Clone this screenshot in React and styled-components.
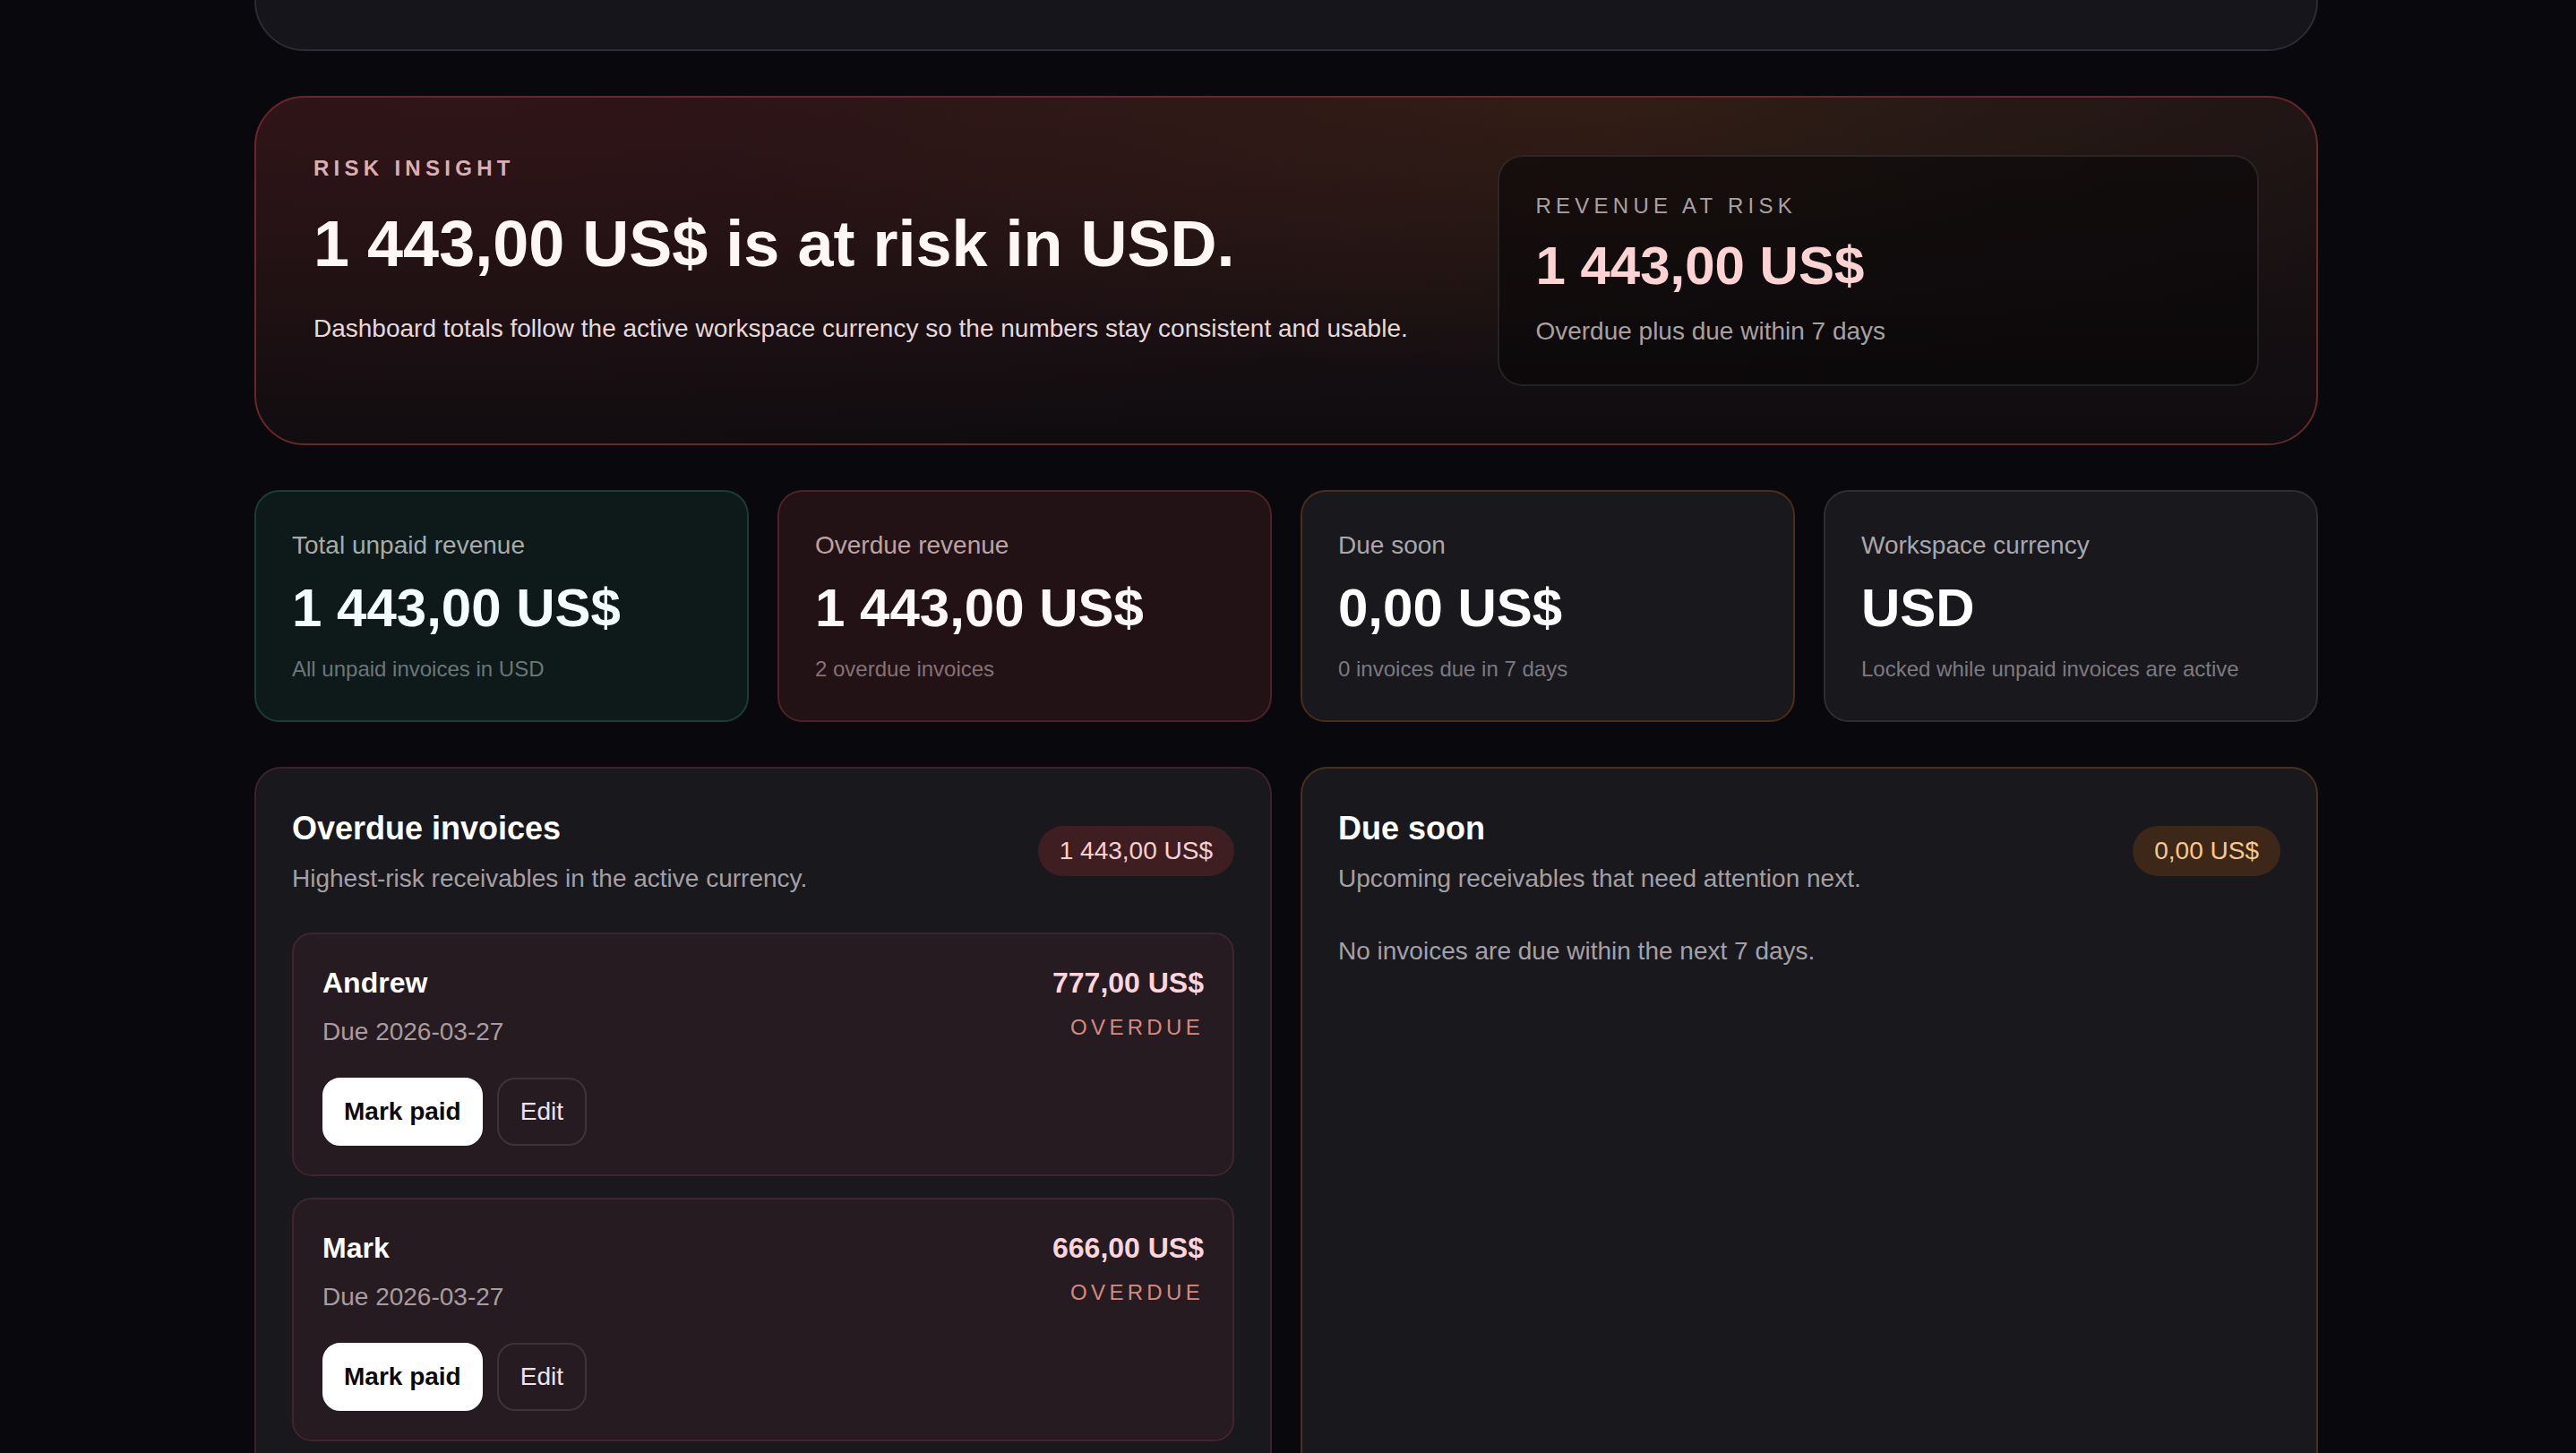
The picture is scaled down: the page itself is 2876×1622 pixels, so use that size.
import React from "react";
import styled, { createGlobalStyle, css } from "styled-components";

const GlobalStyle = createGlobalStyle`
  html, body {
    margin: 0;
    padding: 0;
    background: #09080c;
  }
  body {
    font-family: "Liberation Sans", Arial, Helvetica, sans-serif;
    color: #ffffff;
    -webkit-font-smoothing: antialiased;
  }
  *, *::before, *::after { box-sizing: border-box; }
`;

const Viewport = styled.div`
  height: 1622px;
  overflow: hidden;
  padding-right: 4px;
  background: #09080c;
`;

const Page = styled.main`
  width: 2304px;
  margin: 0 auto;
  display: flex;
  flex-direction: column;
  gap: 50px;
  padding-bottom: 80px;
`;

const TopCard = styled.section`
  height: 200px;
  margin-top: -143px;
  border: 2px solid #2d2c33;
  border-radius: 56px;
  background: #16151b;
`;

const RiskCard = styled.section`
  border: 2px solid #6b2629;
  border-radius: 56px;
  padding: 64px;
  display: grid;
  grid-template-columns: minmax(0, 1.5fr) minmax(0, 1fr);
  gap: 48px;
  align-items: start;
  background:
    radial-gradient(100% 140% at 10% 0%, rgba(105, 26, 30, 0.26) 0%, rgba(105, 26, 30, 0) 75%),
    radial-gradient(60% 110% at 66% 0%, rgba(120, 76, 22, 0.18) 0%, rgba(120, 76, 22, 0) 75%),
    linear-gradient(180deg, #1d1315 0%, #171012 55%, #0f0c10 100%);
`;

const Eyebrow = styled.div`
  font-size: 24px;
  font-weight: 700;
  line-height: 30px;
  letter-spacing: 0.22em;
  text-transform: uppercase;
  color: #dcaeb2;
`;

const Headline = styled.h1`
  margin: 30px 0 0;
  font-size: 72px;
  font-weight: 700;
  line-height: 1.1;
  color: #fff7f5;
`;

const Lead = styled.p`
  margin: 34px 0 0;
  font-size: 28px;
  line-height: 42px;
  color: #e7d9d9;
`;

const RiskBox = styled.div`
  border: 2px solid rgba(255, 255, 255, 0.1);
  border-radius: 28px;
  padding: 40px;
  background: rgba(8, 6, 9, 0.6);
`;

const BoxLabel = styled.div`
  font-size: 24px;
  line-height: 30px;
  letter-spacing: 0.22em;
  text-transform: uppercase;
  color: #aaa2a2;
`;

const BoxAmount = styled.div`
  margin-top: 19px;
  font-size: 60px;
  font-weight: 700;
  line-height: 66px;
  color: #ffd3d3;
`;

const BoxNote = styled.div`
  margin-top: 20px;
  font-size: 28px;
  line-height: 39px;
  color: #a7a0a1;
`;

const statTones = {
  teal: css`
    background: #0e191a;
    border-color: #1a3d37;
    --label: #a4acab;
    --note: #6b7777;
    --value: #f6ffff;
  `,
  red: css`
    background: #221216;
    border-color: #4f2228;
    --label: #b9a3a6;
    --note: #867175;
    --value: #fff9f9;
  `,
  amber: css`
    background: #19181d;
    border-color: #4a2d1a;
    --label: #a8a7ac;
    --note: #7c7a80;
    --value: #ffffff;
  `,
  neutral: css`
    background: #19181d;
    border-color: #2e2d33;
    --label: #a8a7ac;
    --note: #7c7a80;
    --value: #ffffff;
  `,
};

const StatsGrid = styled.section`
  display: grid;
  grid-template-columns: repeat(4, minmax(0, 1fr));
  gap: 32px;
`;

const StatCard = styled.article`
  border: 2px solid;
  border-radius: 28px;
  padding: 40px;
  ${(p) => statTones[p.$tone]}
`;

const StatLabel = styled.div`
  font-size: 28px;
  line-height: 39px;
  color: var(--label);
`;

const StatValue = styled.div`
  margin-top: 18px;
  font-size: 60px;
  font-weight: 700;
  line-height: 66px;
  color: var(--value);
`;

const StatNote = styled.div`
  margin-top: 18px;
  font-size: 24px;
  line-height: 34px;
  color: var(--note);
`;

const PanelsGrid = styled.section`
  display: grid;
  grid-template-columns: repeat(2, minmax(0, 1fr));
  gap: 32px;
`;

const Panel = styled.article`
  border: 2px solid ${(p) => (p.$tone === "red" ? "#3c2329" : "#47301f")};
  border-radius: 30px;
  padding: 40px;
  background: #19181d;
`;

const PanelHeader = styled.header`
  display: flex;
  align-items: center;
  justify-content: space-between;
  gap: 24px;
  margin-bottom: 39px;
`;

const PanelTitle = styled.h2`
  margin: 0;
  font-size: 36px;
  font-weight: 700;
  line-height: 54px;
  color: #ffffff;
`;

const PanelSub = styled.p`
  margin: 8px 0 0;
  font-size: 28px;
  line-height: 42px;
  color: #a2a0a7;
`;

const Pill = styled.span`
  flex: none;
  padding: 8px 24px;
  border-radius: 999px;
  font-size: 28px;
  line-height: 40px;
  white-space: nowrap;
  ${(p) =>
    p.$tone === "red"
      ? css`
          background: #3f1e22;
          color: #f4d2d3;
        `
      : css`
          background: #3d2718;
          color: #f7c98d;
        `}
`;

const InvoiceList = styled.div`
  display: flex;
  flex-direction: column;
  gap: 24px;
`;

const InvoiceCard = styled.div`
  border: 2px solid #41252c;
  border-radius: 22px;
  padding: 32px;
  background: #261b20;
`;

const InvoiceTop = styled.div`
  display: flex;
  justify-content: space-between;
  align-items: flex-start;
  gap: 24px;
`;

const InvoiceMeta = styled.div`
  display: flex;
  flex-direction: column;
  gap: 12px;
`;

const InvoiceAmounts = styled.div`
  display: flex;
  flex-direction: column;
  align-items: flex-end;
  gap: 10px;
`;

const ClientName = styled.div`
  font-size: 32px;
  font-weight: 700;
  line-height: 45px;
  color: #ffffff;
`;

const DueDate = styled.div`
  font-size: 28px;
  line-height: 39px;
  color: #a99ba0;
`;

const Amount = styled.div`
  font-size: 32px;
  font-weight: 700;
  line-height: 45px;
  color: #ffd4da;
`;

const Status = styled.div`
  font-size: 24px;
  line-height: 34px;
  letter-spacing: 0.18em;
  text-transform: uppercase;
  color: #d58a80;
`;

const Actions = styled.div`
  display: flex;
  gap: 16px;
  margin-top: 32px;
`;

const Button = styled.button`
  font-family: inherit;
  font-size: 28px;
  line-height: 40px;
  border-radius: 20px;
  border: 2px solid;
  cursor: pointer;
  ${(p) =>
    p.$variant === "primary"
      ? css`
          padding: 16px 22px;
          background: #ffffff;
          border-color: #ffffff;
          color: #0b0b0e;
          font-weight: 700;
        `
      : css`
          padding: 16px 24px;
          background: transparent;
          border-color: rgba(255, 255, 255, 0.11);
          color: #eee3e5;
          font-weight: 400;
        `}
`;

const EmptyText = styled.p`
  margin: 0;
  font-size: 28px;
  line-height: 42px;
  color: #a3a1a7;
`;

const stats = [
  { tone: "teal", label: "Total unpaid revenue", value: "1 443,00 US$", note: "All unpaid invoices in USD" },
  { tone: "red", label: "Overdue revenue", value: "1 443,00 US$", note: "2 overdue invoices" },
  { tone: "amber", label: "Due soon", value: "0,00 US$", note: "0 invoices due in 7 days" },
  { tone: "neutral", label: "Workspace currency", value: "USD", note: "Locked while unpaid invoices are active" },
];

const overdue = [
  { name: "Andrew", due: "2026-03-27", amount: "777,00 US$" },
  { name: "Mark", due: "2026-03-27", amount: "666,00 US$" },
];

export default function App() {
  return (
    <Viewport>
      <GlobalStyle />
      <Page>
        <TopCard />

        <RiskCard>
          <div>
            <Eyebrow>Risk insight</Eyebrow>
            <Headline>1 443,00 US$ is at risk in USD.</Headline>
            <Lead>
              Dashboard totals follow the active workspace currency so the numbers stay consistent and usable.
            </Lead>
          </div>
          <RiskBox>
            <BoxLabel>Revenue at risk</BoxLabel>
            <BoxAmount>1 443,00 US$</BoxAmount>
            <BoxNote>Overdue plus due within 7 days</BoxNote>
          </RiskBox>
        </RiskCard>

        <StatsGrid>
          {stats.map((s) => (
            <StatCard key={s.label} $tone={s.tone}>
              <StatLabel>{s.label}</StatLabel>
              <StatValue>{s.value}</StatValue>
              <StatNote>{s.note}</StatNote>
            </StatCard>
          ))}
        </StatsGrid>

        <PanelsGrid>
          <Panel $tone="red">
            <PanelHeader>
              <div>
                <PanelTitle>Overdue invoices</PanelTitle>
                <PanelSub>Highest-risk receivables in the active currency.</PanelSub>
              </div>
              <Pill $tone="red">1 443,00 US$</Pill>
            </PanelHeader>
            <InvoiceList>
              {overdue.map((inv) => (
                <InvoiceCard key={inv.name}>
                  <InvoiceTop>
                    <InvoiceMeta>
                      <ClientName>{inv.name}</ClientName>
                      <DueDate>Due {inv.due}</DueDate>
                    </InvoiceMeta>
                    <InvoiceAmounts>
                      <Amount>{inv.amount}</Amount>
                      <Status>Overdue</Status>
                    </InvoiceAmounts>
                  </InvoiceTop>
                  <Actions>
                    <Button $variant="primary">Mark paid</Button>
                    <Button $variant="ghost">Edit</Button>
                  </Actions>
                </InvoiceCard>
              ))}
            </InvoiceList>
          </Panel>

          <Panel $tone="amber">
            <PanelHeader>
              <div>
                <PanelTitle>Due soon</PanelTitle>
                <PanelSub>Upcoming receivables that need attention next.</PanelSub>
              </div>
              <Pill $tone="amber">0,00 US$</Pill>
            </PanelHeader>
            <EmptyText>No invoices are due within the next 7 days.</EmptyText>
          </Panel>
        </PanelsGrid>
      </Page>
    </Viewport>
  );
}
